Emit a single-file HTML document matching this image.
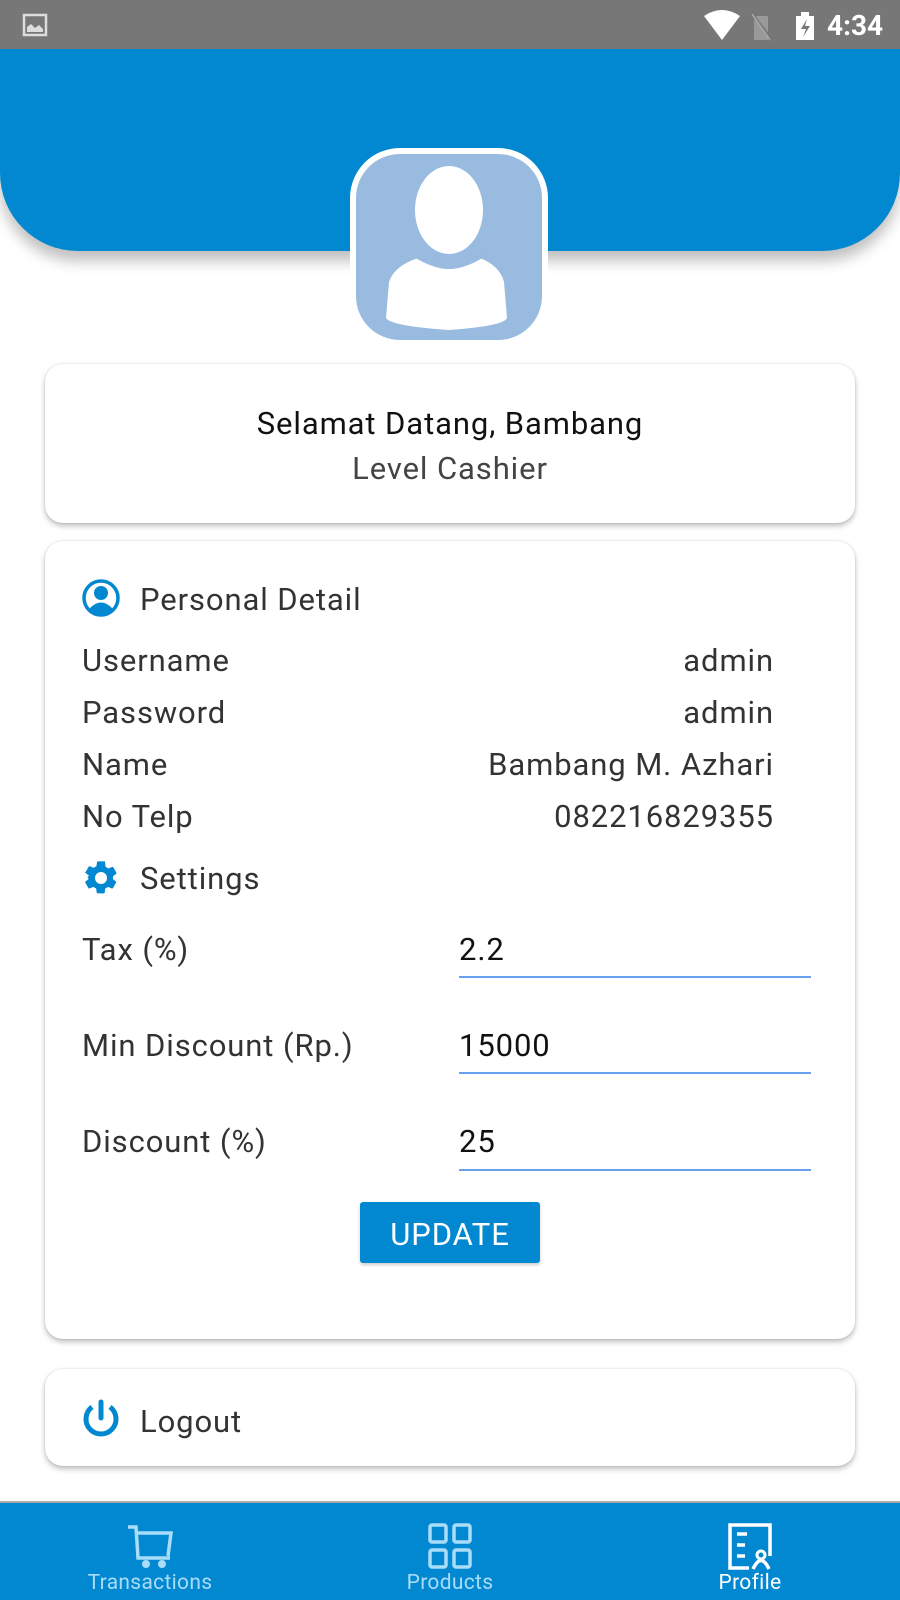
<!DOCTYPE html>
<html><head><meta charset="utf-8"><style>
*{margin:0;padding:0;box-sizing:border-box}
body{width:900px;height:1600px;overflow:hidden;background:#fff;font-family:"Roboto","Liberation Sans",sans-serif;color:#333;position:relative}
.abs{position:absolute}
.status{left:0;top:0;width:900px;height:49px;background:#777}
.header{left:0;top:49px;width:900px;height:202px;background:#0288d1;border-radius:0 0 78px 78px;box-shadow:0 10px 14px rgba(0,0,0,.25)}
.card{background:#fff;border-radius:18px;box-shadow:0 3px 6px rgba(0,0,0,.25),0 0 2px rgba(0,0,0,.12);left:45px;width:810px}
.t{font-size:31px;line-height:1;white-space:nowrap;letter-spacing:0.9px}
.ul{height:2px;background:#6a9ff0;left:459px;width:352px}
</style></head><body>
<div class="abs status"></div>
<svg class="abs" style="left:22px;top:13px" width="26" height="24" viewBox="0 0 26 24"><rect x="2" y="2" width="22" height="20" fill="none" stroke="#ddd" stroke-width="2.5"/><path d="M5 19 L5 14 L9 11 L13 15 L17 12 L21 16 L21 19Z" fill="#ddd"/></svg>
<svg class="abs" style="left:702px;top:10px" width="180" height="32" viewBox="0 0 180 32"><path d="M2 6 Q20 -6 38 6 L20 30Z" fill="#fff"/><path d="M52 6 H66 V30 H52Z" fill="#999"/><path d="M50 4 L70 30" stroke="#777" stroke-width="3"/><path d="M50 4 L68 30" stroke="#aaa" stroke-width="1.5"/><rect x="94" y="6" width="18" height="24" fill="#fff"/><rect x="99" y="2" width="8" height="5" fill="#fff"/><path d="M105 9 L99 19 H104 L101 27 L108 16 H103 Z" fill="#777"/></svg>
<div class="abs t" style="left:827px;top:12px;color:#fff;font-size:28px;letter-spacing:0;font-weight:bold">4:34</div>
<div class="abs header"></div>
<div class="abs" style="left:350px;top:148px;width:198px;height:192px;background:#fff;border-radius:50px"></div>
<div class="abs" style="left:356px;top:154px;width:186px;height:186px;background:#98bbdf;border-radius:44px;overflow:hidden">
<svg width="186" height="186" viewBox="0 0 186 186"><path d="M62 104 Q93 126 124 104 Q144 112 148 128 L151 164 Q148 172 93 176 Q35 172 30 164 L33 128 Q38 112 62 104Z" fill="#fff"/><path d="M60 100 Q93 122 126 100" fill="none" stroke="#98bbdf" stroke-width="7"/><ellipse cx="93" cy="56" rx="34" ry="44" fill="#fff"/></svg></div>
<div class="abs card" style="top:364px;height:159px"></div>
<div class="abs t" style="left:0;width:900px;text-align:center;top:408px;color:#111">Selamat Datang, Bambang</div>
<div class="abs t" style="left:0;width:900px;text-align:center;top:453px;color:#444">Level Cashier</div>
<div class="abs card" style="top:541px;height:798px"></div>
<svg class="abs" style="left:81px;top:578px" width="40" height="40" viewBox="0 0 40 40"><circle cx="20" cy="20" r="17" fill="none" stroke="#0288d1" stroke-width="3.5"/><circle cx="20" cy="15" r="7" fill="#0288d1"/><path d="M8 31 Q20 18 32 31 Q20 40 8 31Z" fill="#0288d1"/></svg>
<div class="abs t" style="left:140px;top:584px">Personal Detail</div>
<div class="abs t" style="left:82px;top:645px">Username</div><div class="abs t" style="right:126px;top:645px">admin</div>
<div class="abs t" style="left:82px;top:697px">Password</div><div class="abs t" style="right:126px;top:697px">admin</div>
<div class="abs t" style="left:82px;top:749px">Name</div><div class="abs t" style="right:126px;top:749px">Bambang M. Azhari</div>
<div class="abs t" style="left:82px;top:801px">No Telp</div><div class="abs t" style="right:126px;top:801px">082216829355</div>
<svg class="abs" style="left:81px;top:858px" width="40" height="40" viewBox="0 0 24 24"><path fill="#0288d1" d="M19.14 12.94c.04-.3.06-.61.06-.94 0-.32-.02-.64-.07-.94l2.03-1.58a.49.49 0 0 0 .12-.61l-1.92-3.32a.49.49 0 0 0-.59-.22l-2.39.96c-.5-.38-1.030-.7-1.62-.94l-.36-2.540A.48.48 0 0 0 13.92 2h-3.84c-.24 0-.43.17-.47.41l-.36 2.54c-.59.24-1.130.57-1.62.94l-2.39-.96a.49.49 0 0 0-.59.22L2.74 8.47c-.12.21-.8.47.12.61l2.03 1.58c-.5.3-.9.63-.9.94s.2.64.7.94l-2.03 1.58a.49.49 0 0 0-.12.61l1.92 3.32c.12.22.37.29.59.22l2.39-.96c.5.38 1.030.7 1.62.94l.36 2.54c.5.24.24.41.48.41h3.84c.24 0 .44-.17.47-.41l.36-2.54c.59-.24 1.130-.56 1.62-.94l2.39.96c.22.08.47 0 .59-.22l1.92-3.32a.49.49 0 0 0-.12-.61l-2.010-1.58zM12 15.6A3.6 3.6 0 1 1 12 8.4a3.6 3.6 0 0 1 0 7.2z"/></svg>
<div class="abs t" style="left:140px;top:863px">Settings</div>
<div class="abs t" style="left:82px;top:934px">Tax (%)</div><div class="abs t" style="left:459px;top:934px;color:#111">2.2</div><div class="abs ul" style="top:976px"></div>
<div class="abs t" style="left:82px;top:1030px">Min Discount (Rp.)</div><div class="abs t" style="left:459px;top:1030px;color:#111">15000</div><div class="abs ul" style="top:1072px"></div>
<div class="abs t" style="left:82px;top:1126px">Discount (%)</div><div class="abs t" style="left:459px;top:1126px;color:#111">25</div><div class="abs ul" style="top:1169px"></div>
<div class="abs" style="left:360px;top:1202px;width:180px;height:61px;background:#0288d1;border-radius:3px;box-shadow:0 2px 3px rgba(0,0,0,.2)"></div>
<div class="abs t" style="left:360px;width:180px;text-align:center;top:1219px;color:#fff">UPDATE</div>
<div class="abs card" style="top:1369px;height:97px"></div>
<svg class="abs" style="left:80px;top:1398px" width="42" height="42" viewBox="0 0 42 42"><path d="M12 9 A15 15 0 1 0 30 9" fill="none" stroke="#0288d1" stroke-width="5"/><path d="M21 4 V20" stroke="#0288d1" stroke-width="5" stroke-linecap="round"/></svg>
<div class="abs t" style="left:140px;top:1406px">Logout</div>
<div class="abs" style="left:0;top:1501px;width:900px;height:99px;background:#0288d1;border-top:2px solid #aaa"></div>
<svg class="abs" style="left:126px;top:1524px" width="48" height="46" viewBox="0 0 48 46"><path d="M2 3 H10 L12 34 H44 M11 9 H45 L42 32" fill="none" stroke="#a8dcf7" stroke-width="3.5"/><circle cx="20" cy="40" r="4" fill="#a8dcf7"/><circle cx="36" cy="40" r="4" fill="#a8dcf7"/></svg>
<svg class="abs" style="left:427px;top:1522px" width="46" height="48" viewBox="0 0 46 48"><g fill="none" stroke="#a8dcf7" stroke-width="3.5"><rect x="3" y="3" width="16" height="17" rx="2"/><rect x="27" y="3" width="16" height="17" rx="2"/><rect x="3" y="28" width="16" height="17" rx="2"/><rect x="27" y="28" width="16" height="17" rx="2"/></g></svg>
<svg class="abs" style="left:727px;top:1522px" width="48" height="48" viewBox="0 0 48 48"><path d="M22 46 H3 V3 H43 V34" fill="none" stroke="#fff" stroke-width="3.5"/><path d="M10 12 H20 M10 23 H18 M10 34 H18" stroke="#fff" stroke-width="3.5"/><circle cx="34" cy="33" r="4" fill="none" stroke="#fff" stroke-width="3"/><path d="M26 47 Q34 30 42 47" fill="none" stroke="#fff" stroke-width="3.5"/></svg>
<div class="abs t" style="left:50px;width:200px;text-align:center;top:1573px;font-size:21px;letter-spacing:0.3px;color:#a8dcf7">Transactions</div>
<div class="abs t" style="left:350px;width:200px;text-align:center;top:1573px;font-size:21px;letter-spacing:0.3px;color:#a8dcf7">Products</div>
<div class="abs t" style="left:650px;width:200px;text-align:center;top:1573px;font-size:21px;letter-spacing:0.3px;color:#fff">Profile</div>
</body></html>
